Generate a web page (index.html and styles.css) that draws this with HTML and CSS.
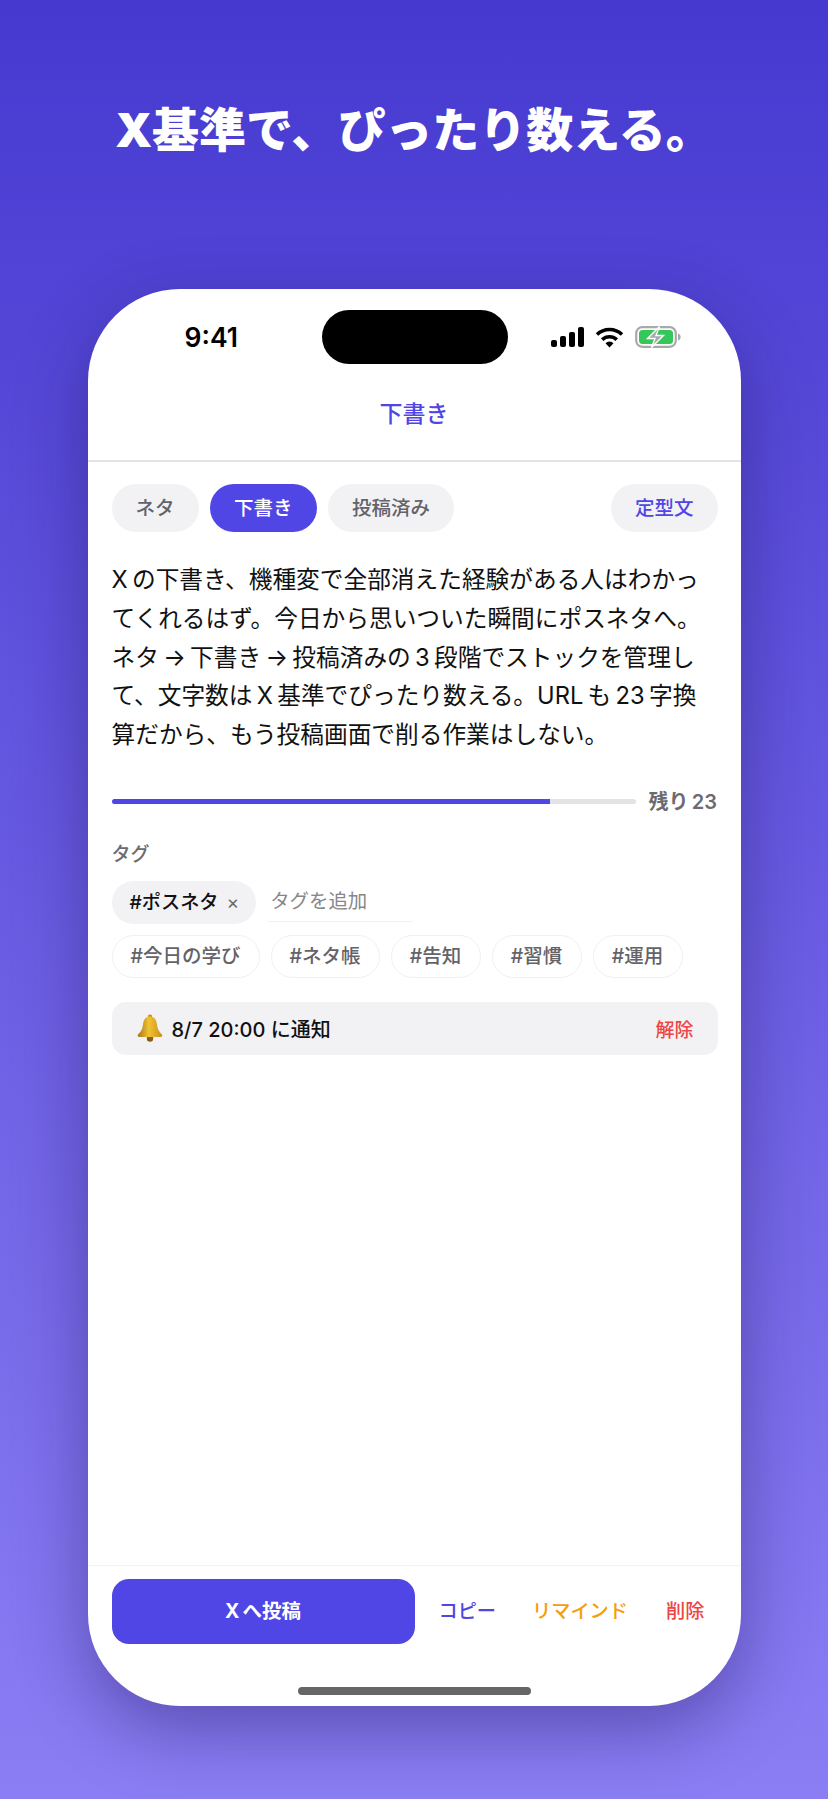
FILE: index.html
```html
<!DOCTYPE html>
<html lang="ja">
<head>
    <meta charset="UTF-8">
    <meta name="viewport" content="width=device-width, initial-scale=1.0">
    <title>下書き</title>
    <link rel="stylesheet" href="styles.css">
</head>
<body>
    <h1 class="headline">X基準で、ぴったり数える。</h1>
    <div class="phone">
        <div class="status-bar">
            <span class="clock">9:41</span>
            <div class="island"></div>
            <div class="status-icons">
                <svg width="33" height="20" viewBox="0 0 33 20" fill="#000">
                    <rect x="0" y="13" width="6" height="7" rx="2"/>
                    <rect x="9" y="9" width="6" height="11" rx="2"/>
                    <rect x="18" y="5" width="6" height="15" rx="2"/>
                    <rect x="27" y="0" width="6" height="20" rx="2"/>
                </svg>
                <svg class="wifi" width="29" height="21" viewBox="0 0 29 21" fill="none" stroke="#000" stroke-width="3.6">
                    <path d="M2 7.5a18 18 0 0 1 25 0"/>
                    <path d="M7.2 12.6a10.6 10.6 0 0 1 14.6 0"/>
                    <path d="M14.5 20.6l-4-4.4a5.6 5.6 0 0 1 8 0z" fill="#000" stroke="none"/>
                </svg>
                <svg class="battery" width="46" height="22" viewBox="0 0 46 22">
                    <rect x="1.2" y="1.2" width="39.6" height="19.6" rx="6" fill="none" stroke="#a9a9ab" stroke-width="2.2"/>
                    <rect x="4" y="4" width="34" height="14" rx="3.5" fill="#34c759"/>
                    <path d="M43 7.5c1.8.5 2.6 1.8 2.6 3.5s-.8 3-2.6 3.5z" fill="#a9a9ab"/>
                    <path d="M24.5 0.5L12.5 12.5h7.5L16.5 21.5l12-12h-7.5z" fill="#a9a9ab" stroke="#fff" stroke-width="1.4"/>
                </svg>
            </div>
        </div>

        <div class="nav-title">下書き</div>

        <div class="content">
            <div class="tabs">
                <span class="tab">ネタ</span>
                <span class="tab active">下書き</span>
                <span class="tab">投稿済み</span>
                <span class="tab template">定型文</span>
            </div>

            <p class="draft-text">X&#8201;の下書き、機種変で全部消えた経験がある人はわかっ<br>てくれるはず。今日から思いついた瞬間にポスネタへ。<br>ネタ&#8201;→&#8201;下書き&#8201;→&#8201;投稿済みの&#8201;3&#8201;段階でストックを管理し<br>て、文字数は&#8201;X&#8201;基準でぴったり数える。URL&#8201;も&#8201;23&#8201;字換<br>算だから、もう投稿画面で削る作業はしない。</p>

            <div class="counter">
                <div class="counter-bar">
                    <div class="counter-fill" style="width: 83.6%"></div>
                </div>
                <span class="counter-text">残り&#8201;23</span>
            </div>

            <div class="tag-label">タグ</div>
            <div class="tag-input-row">
                <span class="tag-chip">#ポスネタ<span class="tag-remove">×</span></span>
                <span class="tag-placeholder">タグを追加</span>
            </div>
            <div class="tag-suggestions">
                <span class="tag-suggest">#今日の学び</span>
                <span class="tag-suggest">#ネタ帳</span>
                <span class="tag-suggest">#告知</span>
                <span class="tag-suggest">#習慣</span>
                <span class="tag-suggest">#運用</span>
            </div>

            <div class="reminder">
                <svg class="bell" width="28" height="28" viewBox="0 0 28 28">
                    <defs>
                        <linearGradient id="bellGold" x1="0" y1="0" x2="1" y2="0">
                            <stop offset="0" stop-color="#a8741a"/>
                            <stop offset="0.45" stop-color="#f2c230"/>
                            <stop offset="1" stop-color="#c8901f"/>
                        </linearGradient>
                    </defs>
                    <circle cx="14" cy="2.8" r="2.2" fill="#c28d1e"/>
                    <circle cx="14" cy="24.5" r="3.2" fill="#8a5d14"/>
                    <path d="M14 2.5c-4.6 0-6.6 3.6-7 8-.4 4.6-2.2 7.4-5 10-.8 1.3-.2 2.5 1.4 2.5h21.2c1.6 0 2.2-1.2 1.4-2.5-2.8-2.6-4.6-5.4-5-10-.4-4.4-2.4-8-7-8z" fill="url(#bellGold)"/>
                </svg>
                <span class="reminder-text">8/7 20:00 に通知</span>
                <span class="reminder-clear">解除</span>
            </div>
        </div>

        <div class="action-bar">
            <div class="post-btn">X&#8201;へ投稿</div>
            <span class="action copy">コピー</span>
            <span class="action remind">リマインド</span>
            <span class="action delete">削除</span>
        </div>
        <div class="home-row">
            <div class="home-indicator"></div>
        </div>
    </div>
</body>
</html>
```

FILE: styles.css
```css
* {
    box-sizing: border-box;
}
html, body {
    margin: 0;
    padding: 0;
}
body {
    width: 828px;
    height: 1799px;
    overflow: hidden;
    font-family: Inter, "Noto Sans CJK JP", sans-serif;
    background: linear-gradient(to bottom, #4639d0, #8b7ef4);
    display: flex;
    flex-direction: column;
    align-items: center;
}
.headline {
    margin: 96px 0 0;
    height: 68px;
    line-height: 68px;
    font-size: 47px;
    font-weight: 900;
    color: #fff;
    text-align: center;
    white-space: nowrap;
}
.phone {
    width: 653px;
    height: 1417px;
    margin-top: 125px;
    background-color: #fff;
    border-radius: 92px;
    box-shadow: 0 24px 70px rgba(30, 20, 90, 0.42);
    display: flex;
    flex-direction: column;
    overflow: hidden;
}
.status-bar {
    height: 75px;
    padding: 21px 60px 0 97px;
    display: grid;
    grid-template-columns: 1fr 186px 1fr;
    align-items: center;
    flex-shrink: 0;
}
.clock {
    font-family: Inter, sans-serif;
    font-size: 26.5px;
    font-weight: 600;
    color: #000;
}
.island {
    height: 54px;
    margin-left: -18px;
    margin-right: 18px;
    background-color: #000;
    border-radius: 27px;
}
.status-icons {
    display: flex;
    align-items: center;
    justify-content: flex-end;
}
.wifi {
    margin-left: 11px;
}
.battery {
    margin-left: 11px;
}
.nav-title {
    height: 98px;
    padding-bottom: 1px;
    border-bottom: 2px solid #e4e4e7;
    display: flex;
    align-items: center;
    justify-content: center;
    font-size: 23px;
    font-weight: 500;
    color: #4f46e5;
    flex-shrink: 0;
}
.content {
    flex: 1;
    padding: 22px 23px 0 24px;
}
.tabs {
    display: flex;
    gap: 11.5px;
}
.tab {
    height: 48px;
    padding: 0 24px;
    border-radius: 24px;
    background-color: #f2f2f5;
    color: #636369;
    font-size: 19.5px;
    font-weight: 500;
    line-height: 48px;
}
.tab.active {
    background-color: #4f46e5;
    color: #fff;
}
.tab.template {
    margin-left: auto;
    color: #4f46e5;
}
.draft-text {
    margin: 29px 0 0;
    font-size: 23.7px;
    line-height: 38.8px;
    color: #111;
    white-space: nowrap;
}
.counter {
    margin-top: 32px;
    display: flex;
    align-items: center;
    gap: 13px;
    height: 30px;
}
.counter-bar {
    width: 524px;
    height: 5px;
    border-radius: 3px;
    background-color: #e3e3e6;
    overflow: hidden;
}
.counter-fill {
    height: 100%;
    background-color: #4f46e5;
}
.counter-text {
    padding-bottom: 2px;
    font-size: 20px;
    font-weight: 600;
    color: #6b6b70;
    white-space: nowrap;
}
.tag-label {
    margin-top: 24px;
    font-size: 19px;
    font-weight: 500;
    line-height: 28px;
    color: #6b6b70;
}
.tag-input-row {
    margin-top: 12px;
    display: flex;
    gap: 12px;
}
.tag-chip {
    height: 43px;
    padding: 0 17px 0 18px;
    border-radius: 21.5px;
    background-color: #f2f2f5;
    color: #111;
    font-size: 19.2px;
    font-weight: 500;
    line-height: 43px;
    white-space: nowrap;
}
.tag-remove {
    margin-left: 8px;
    color: #6b6b70;
    font-weight: 400;
}
.tag-placeholder {
    width: 145px;
    height: 41px;
    padding-left: 2px;
    border-bottom: 1px solid #f2f2f4;
    color: #86868b;
    font-size: 19.4px;
    line-height: 41px;
}
.tag-suggestions {
    margin-top: 11px;
    display: flex;
    gap: 11px;
}
.tag-suggest {
    height: 43px;
    width: 90px;
    border: 1px solid #f0f0f3;
    border-radius: 21.5px;
    color: #636369;
    font-size: 19.5px;
    font-weight: 500;
    line-height: 41px;
    text-align: center;
    white-space: nowrap;
}
.tag-suggest:first-child {
    width: 148px;
}
.tag-suggest:nth-child(2) {
    width: 109px;
}
.reminder {
    margin-top: 24px;
    height: 53px;
    padding: 0 24px;
    border-radius: 14px;
    background-color: #f2f2f5;
    display: flex;
    align-items: center;
}
.bell {
    flex-shrink: 0;
}
.reminder-text {
    margin-left: 8px;
    font-size: 20px;
    font-weight: 500;
    color: #111;
}
.reminder-clear {
    margin-left: auto;
    font-size: 19px;
    font-weight: 500;
    color: #ef4444;
}
.action-bar {
    height: 91px;
    padding: 13px 35px 0 24px;
    border-top: 1px solid #f3f3f5;
    display: flex;
    align-items: flex-start;
    flex-shrink: 0;
}
.post-btn {
    width: 303px;
    height: 65px;
    border-radius: 17px;
    background-color: #4f46e5;
    color: #fff;
    font-size: 19.5px;
    font-weight: 700;
    line-height: 65px;
    text-align: center;
}
.action {
    font-size: 19.2px;
    font-weight: 500;
    line-height: 65px;
    white-space: nowrap;
}
.copy {
    margin-left: 24px;
    color: #4f46e5;
}
.remind {
    margin-left: 36px;
    color: #f59e0b;
}
.delete {
    margin-left: 38px;
    color: #ef4444;
}
.home-row {
    height: 50px;
    padding-top: 31px;
    display: flex;
    justify-content: center;
    flex-shrink: 0;
}
.home-indicator {
    width: 233px;
    height: 8px;
    border-radius: 4px;
    background-color: #666;
}
```
